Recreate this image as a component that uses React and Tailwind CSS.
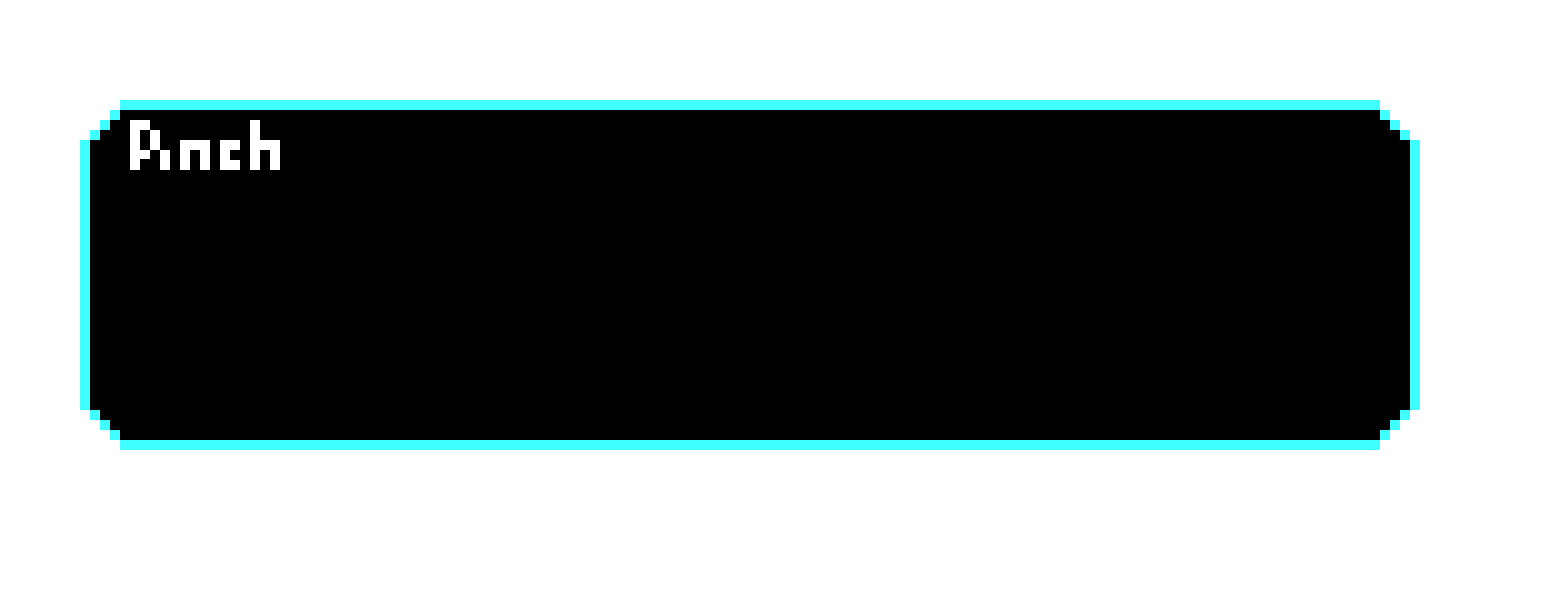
export default function App() {
  return (
    <div className="min-h-[590px] w-[1550px] bg-white pl-[80px] pt-[100px]">
      <svg width="0" height="0" className="absolute">
        <defs>
          <filter
            id="pix"
            filterUnits="userSpaceOnUse"
            x="0"
            y="0"
            width="160"
            height="50"
            colorInterpolationFilters="sRGB"
          >
            <feFlood x="4" y="4" width="2" height="2" floodColor="#ffffff" />
            <feComposite width="10" height="10" />
            <feTile result="grid" />
            <feComposite in="SourceGraphic" in2="grid" operator="in" />
            <feMorphology operator="dilate" radius="4" />
            <feComponentTransfer>
              <feFuncR type="linear" slope="0" intercept="1" />
              <feFuncG type="linear" slope="0" intercept="1" />
              <feFuncB type="linear" slope="0" intercept="1" />
              <feFuncA type="discrete" tableValues="0 1" />
            </feComponentTransfer>
          </filter>
        </defs>
      </svg>
      <div className="relative h-[350px] w-[1340px] border-[10px] border-[#40ffff] bg-black pl-[40px] pt-[10px]">
        <Corner className="-left-[10px] -top-[10px]" />
        <Corner className="-right-[10px] -top-[10px] -scale-x-100" />
        <Corner className="-bottom-[10px] -left-[10px] -scale-y-100" />
        <Corner className="-bottom-[10px] -right-[10px] -scale-100" />
        <div className="h-[50px] w-[160px] [filter:url(#pix)]">
          <div className="flex whitespace-nowrap pt-[22px] font-['DejaVu_Sans',sans-serif] text-[40px] font-bold leading-[30px] text-white [-webkit-text-stroke:2px_white]">
            <span className="w-[28px] shrink-0 origin-[0_29px] scale-y-[1.62] [-webkit-text-stroke:0]">P</span>
            <span className="w-[17px] shrink-0 origin-[0_29px] scale-y-[0.8]">i</span>
            <span className="w-[43px] shrink-0 origin-[0_29px] scale-x-[1.4] scale-y-[1.486]">n</span>
            <span className="w-[28px] shrink-0 origin-[0_29px] scale-y-[1.486]">c</span>
            <span className="w-[40px] shrink-0 origin-[0_29px] scale-x-[1.3] scale-y-[1.486]">h</span>
          </div>
        </div>
      </div>
    </div>
  );
}

function Corner({ className }) {
  return (
    <svg
      width="40"
      height="40"
      viewBox="0 0 40 40"
      shapeRendering="crispEdges"
      className={`absolute ${className}`}
    >
      <rect x="0" y="0" width="40" height="10" fill="#ffffff" />
      <rect x="0" y="10" width="30" height="10" fill="#ffffff" />
      <rect x="30" y="10" width="10" height="10" fill="#40ffff" />
      <rect x="0" y="20" width="20" height="10" fill="#ffffff" />
      <rect x="20" y="20" width="10" height="10" fill="#40ffff" />
      <rect x="30" y="20" width="10" height="10" fill="#000000" />
      <rect x="0" y="30" width="10" height="10" fill="#ffffff" />
      <rect x="10" y="30" width="10" height="10" fill="#40ffff" />
      <rect x="20" y="30" width="20" height="10" fill="#000000" />
    </svg>
  );
}
